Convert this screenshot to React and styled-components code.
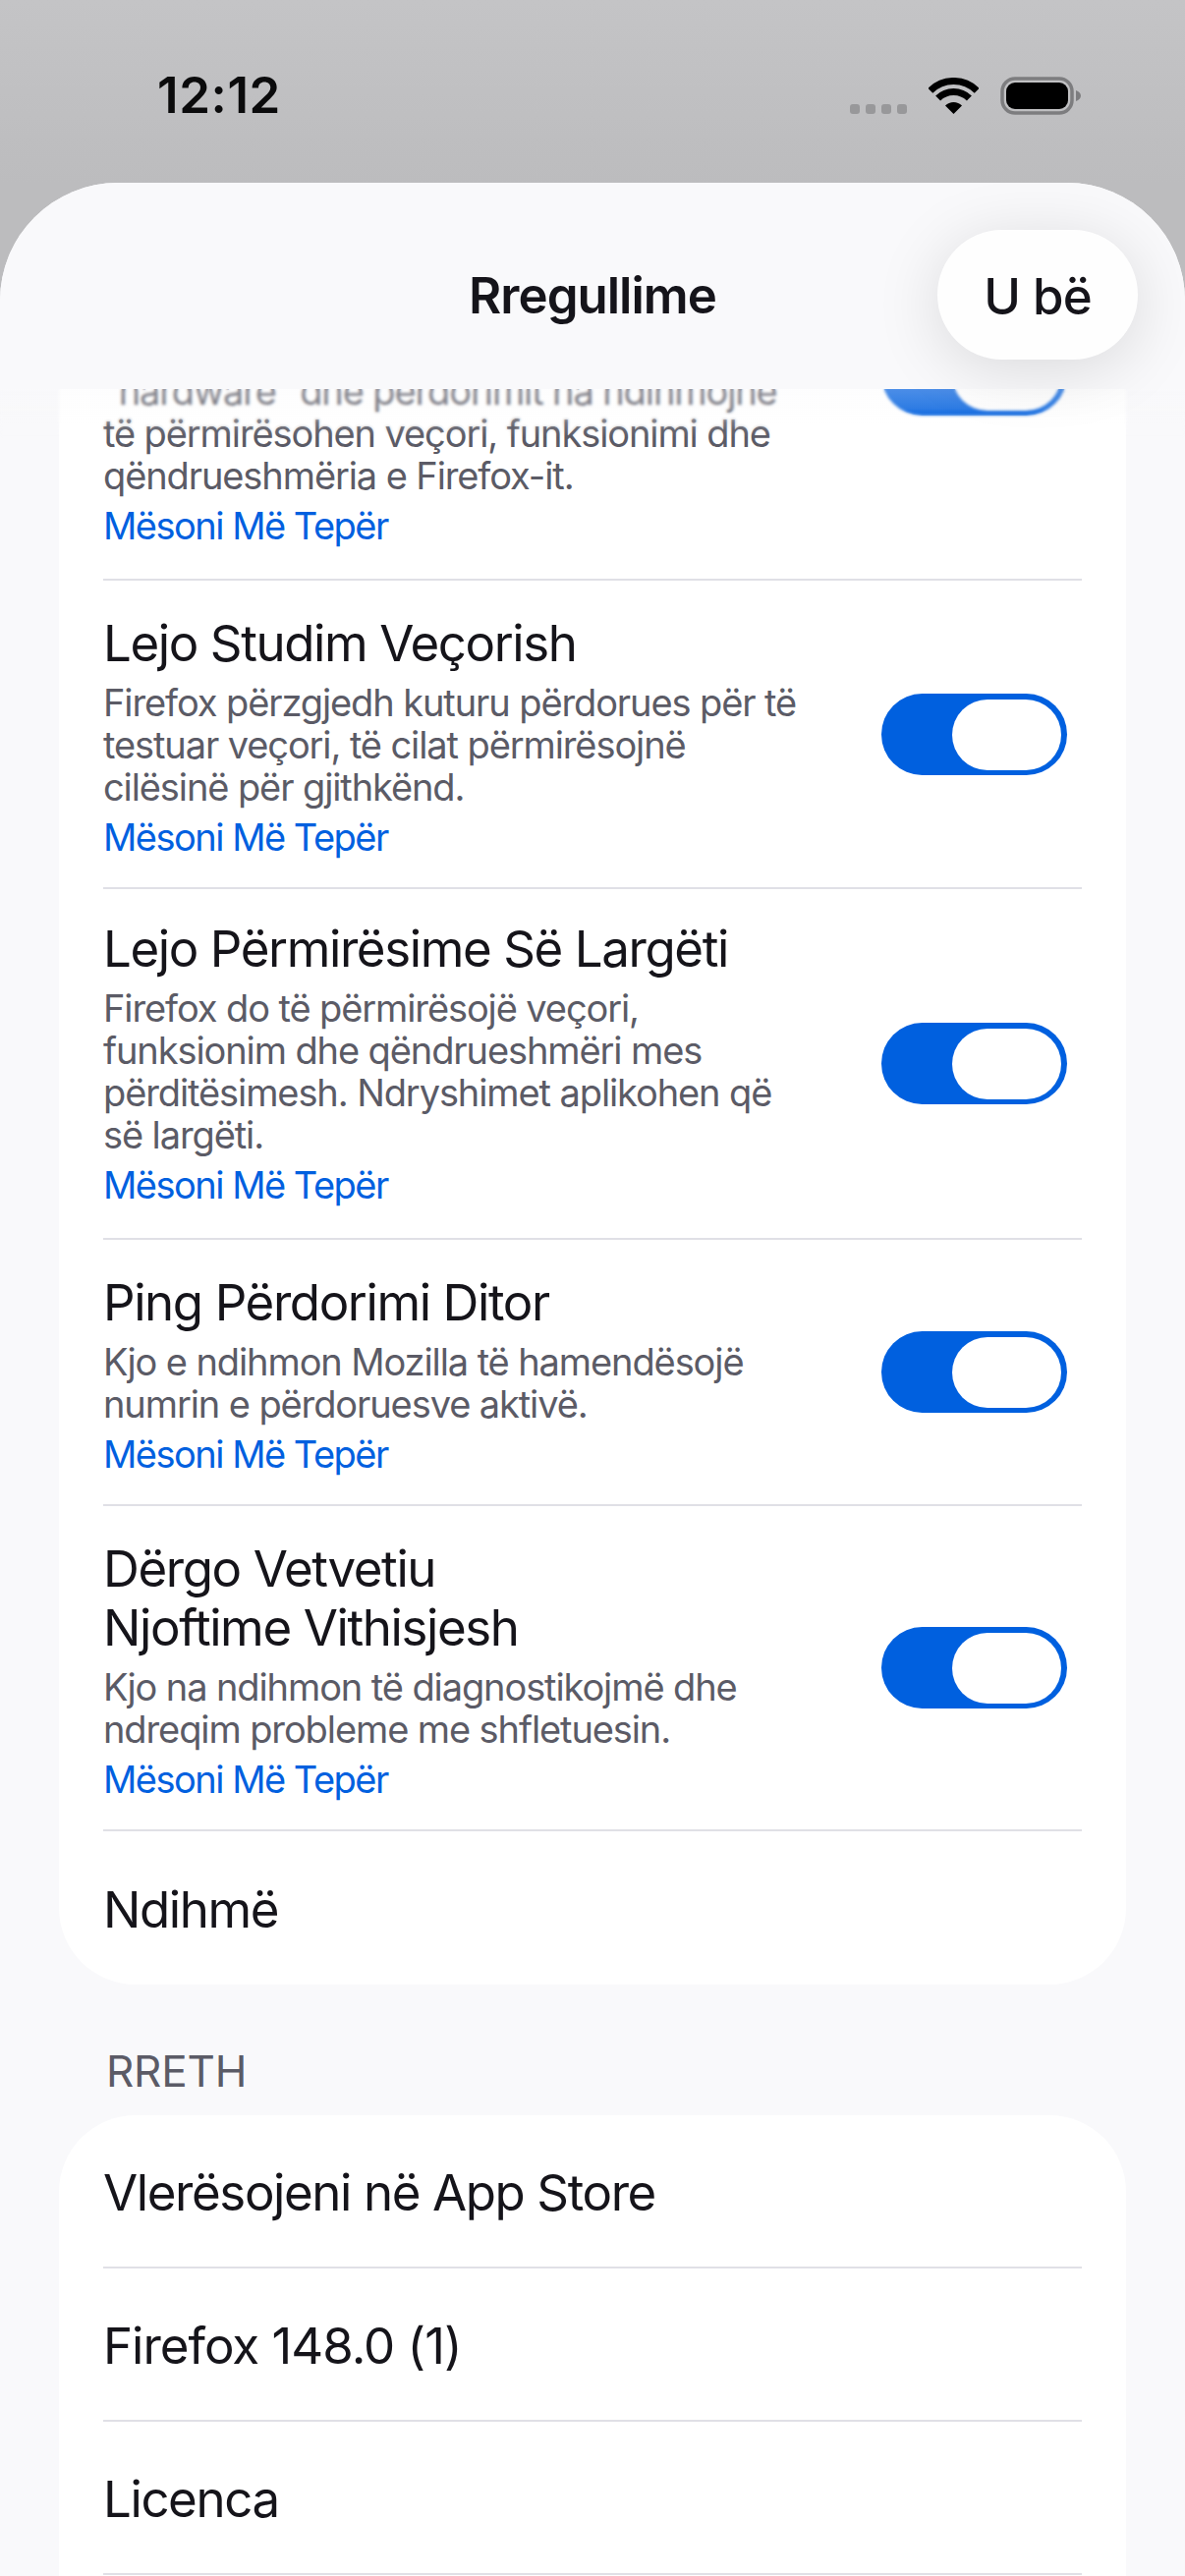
import React from "react";
import styled, { createGlobalStyle } from "styled-components";

const GlobalStyle = createGlobalStyle`
  html, body {
    margin: 0;
    padding: 0;
    height: 2622px;
    overflow: hidden;
    background: #c2c2c4;
  }
  * {
    box-sizing: border-box;
  }
`;

const Screen = styled.div`
  width: 1206px;
  height: 2622px;
  display: flex;
  flex-direction: column;
  overflow: hidden;
  font-family: Inter, "Noto Sans", sans-serif;
  background: linear-gradient(#c4c4c6 0, #bcbcbe 186px);
`;

const StatusBar = styled.header`
  height: 186px;
  flex-shrink: 0;
  display: flex;
  align-items: flex-start;
  justify-content: space-between;
  padding: 66px 106px 0 160px;
`;

const Time = styled.span`
  font-size: 51px;
  font-weight: 600;
  line-height: 62px;
  letter-spacing: 0.6px;
  color: #0b0b0c;
`;

const StatusIcons = styled.div`
  display: flex;
  align-items: flex-start;
  padding-top: 12px;
`;

const Signal = styled.div`
  display: flex;
  gap: 6px;
  margin: 28px 22px 0 0;
`;

const SignalDot = styled.span`
  width: 10px;
  height: 10px;
  border-radius: 3px;
  background: #98989a;
`;

const WifiIcon = styled.svg`
  width: 51px;
  height: 37px;
  margin: 1px 22px 0 0;
`;

const BatteryIcon = styled.svg`
  width: 82px;
  height: 39px;
`;

const Sheet = styled.main`
  position: relative;
  flex: 1;
  min-height: 0;
  display: flex;
  flex-direction: column;
  overflow: hidden;
  background: #f9f9fb;
  border-radius: 120px 120px 0 0;
`;

const NavBar = styled.div`
  position: relative;
  z-index: 2;
  height: 210px;
  flex-shrink: 0;
  display: flex;
  align-items: center;
  justify-content: center;
  background: #f9f9fb;
`;

const NavTitle = styled.h1`
  margin: 19px 0 0;
  font-size: 51px;
  font-weight: 600;
  line-height: 62px;
  letter-spacing: -1px;
  color: #15141a;
`;

const DoneButton = styled.button`
  position: absolute;
  top: 48px;
  right: 48px;
  width: 204px;
  height: 132px;
  border: 0;
  padding: 4px 0 0;
  border-radius: 66px;
  background: #fefefe;
  box-shadow: 0 10px 66px rgba(0, 0, 0, 0.13);
  font: 500 51px/62px Inter, "Noto Sans", sans-serif;
  letter-spacing: -0.8px;
  color: #15141a;
`;

const Scroller = styled.div`
  position: relative;
  flex: 1;
  min-height: 0;
  overflow: hidden;
`;

const ScrollFade = styled.div`
  position: absolute;
  z-index: 1;
  top: 0;
  left: 0;
  right: 0;
  height: 50px;
  background: linear-gradient(rgba(249, 249, 251, 0.3), rgba(249, 249, 251, 0));
  backdrop-filter: blur(1.5px);
  mask-image: linear-gradient(#000 40%, transparent);
`;

const ScrollContent = styled.div`
  margin-top: -222px;
  padding: 0 60px;
`;

const Card = styled.section`
  overflow: hidden;
  background: #fff;
  border-radius: 78px;
`;

const Row = styled.div`
  margin: 0 45px;
  display: flex;
  align-items: center;
  justify-content: space-between;
  min-height: 156px;
  border-bottom: ${(p) => (p.$last ? "0" : "2px solid #e0e0e6")};
`;

const RowText = styled.div`
  display: flex;
  flex-direction: column;
  padding: ${(p) => p.$top}px 0 ${(p) => 63 - p.$top}px;
`;

const RowTitle = styled.div`
  font-size: 51px;
  line-height: 60px;
  letter-spacing: ${(p) => p.$tracking ?? -1.4}px;
  white-space: pre-line;
  color: #15141a;
`;

const PlainLabel = styled(RowTitle)`
  padding-top: 4px;
`;

const RowDescription = styled.div`
  margin-top: 9px;
  font-size: 38px;
  line-height: 43px;
  letter-spacing: -1.1px;
  white-space: pre-line;
  color: #5b5b66;
`;

const LearnMore = styled.a`
  margin-top: 8px;
  font-size: 38px;
  line-height: 43px;
  letter-spacing: -1.5px;
  color: #0060df;
`;

const Toggle = styled.div`
  flex-shrink: 0;
  width: 189px;
  height: 83px;
  margin-right: 15px;
  padding: 6px 6px 5px;
  display: flex;
  justify-content: flex-end;
  border-radius: 42px;
  background: #0060df;
`;

const ToggleKnob = styled.span`
  width: 111px;
  height: 72px;
  border-radius: 36px;
  background: #fff;
`;

const SectionLabel = styled.h2`
  margin: 61px 0 18px 48px;
  font-size: 44px;
  font-weight: 400;
  line-height: 54px;
  letter-spacing: -0.2px;
  color: #5b5b66;
`;

const settings = [
  {
    title: "Dërgo të Dhëna\nTeknike dhe Ndërveprimi",
    text: "Të dhënat rreth pajisjes suaj, formësimit\n“hardware” dhe përdorimit na ndihmojnë\ntë përmirësohen veçori, funksionimi dhe\nqëndrueshmëria e Firefox-it.",
    top: 31,
  },
  {
    title: "Lejo Studim Veçorish",
    text: "Firefox përzgjedh kuturu përdorues për të\ntestuar veçori, të cilat përmirësojnë\ncilësinë për gjithkënd.",
    top: 34,
  },
  {
    title: "Lejo Përmirësime Së Largëti",
    text: "Firefox do të përmirësojë veçori,\nfunksionim dhe qëndrueshmëri mes\npërditësimesh. Ndryshimet aplikohen që\nsë largëti.",
    top: 31,
  },
  {
    title: "Ping Përdorimi Ditor",
    text: "Kjo e ndihmon Mozilla të hamendësojë\nnumrin e përdoruesve aktivë.",
    top: 34,
  },
  {
    title: "Dërgo Vetvetiu\nNjoftime Vithisjesh",
    text: "Kjo na ndihmon të diagnostikojmë dhe\nndreqim probleme me shfletuesin.",
    top: 34,
  },
];

const aboutRows = [
  { label: "Vlerësojeni në App Store" },
  { label: "Firefox 148.0 (1)", tracking: -1 },
  { label: "Licenca" },
  { label: "Të Drejtat Tuaja" },
];

function App() {
  return (
    <Screen>
      <GlobalStyle />
      <StatusBar>
        <Time>12:12</Time>
        <StatusIcons>
          <Signal>
            <SignalDot />
            <SignalDot />
            <SignalDot />
            <SignalDot />
          </Signal>
          <WifiIcon viewBox="0 0 51 37">
            <path d="M1.8 13.3A33.5 33.5 0 0 1 49.2 13.3" fill="none" stroke="#000" strokeWidth="7" />
            <path d="M9.6 21.1A22.5 22.5 0 0 1 41.4 21.1" fill="none" stroke="#000" strokeWidth="7" />
            <path d="M25.5 37L17 28.5A12 12 0 0 1 34 28.5Z" fill="#000" />
          </WifiIcon>
          <BatteryIcon viewBox="0 0 82 39">
            <rect x="2" y="2" width="71" height="35" rx="13" fill="none" stroke="#7d7d7f" strokeWidth="3.5" />
            <rect x="6" y="6" width="63" height="27" rx="9" fill="#000" />
            <path d="M77 14C80 15 82 17 82 19.5C82 22 80 24 77 25Z" fill="#7d7d7f" />
          </BatteryIcon>
        </StatusIcons>
      </StatusBar>

      <Sheet>
        <NavBar>
          <NavTitle>Rregullime</NavTitle>
          <DoneButton>U bë</DoneButton>
        </NavBar>

        <Scroller>
          <ScrollFade />
          <ScrollContent>
            <Card>
              {settings.map((item) => (
                <Row key={item.title}>
                  <RowText $top={item.top}>
                    <RowTitle>{item.title}</RowTitle>
                    <RowDescription>{item.text}</RowDescription>
                    <LearnMore>Mësoni Më Tepër</LearnMore>
                  </RowText>
                  <Toggle>
                    <ToggleKnob />
                  </Toggle>
                </Row>
              ))}
              <Row $last>
                <PlainLabel>Ndihmë</PlainLabel>
              </Row>
            </Card>

            <SectionLabel>RRETH</SectionLabel>

            <Card>
              {aboutRows.map((row, i) => (
                <Row key={row.label} $last={i === aboutRows.length - 1}>
                  <PlainLabel $tracking={row.tracking}>{row.label}</PlainLabel>
                </Row>
              ))}
            </Card>
          </ScrollContent>
        </Scroller>
      </Sheet>
    </Screen>
  );
}

export default App;
